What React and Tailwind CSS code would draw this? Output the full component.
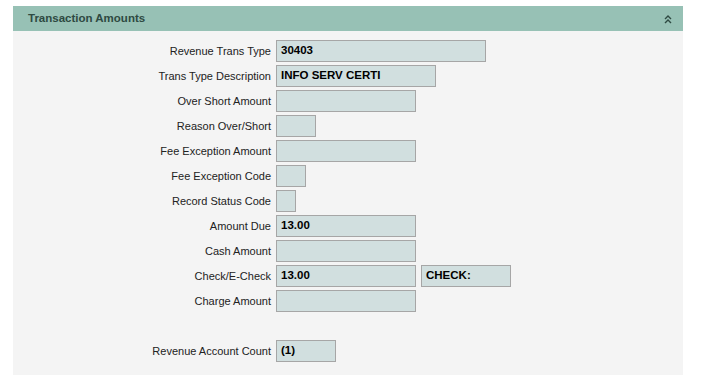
import React from 'react';

const rows = [
  { label: 'Revenue Trans Type', value: '30403', w: 'w-[210px]' },
  { label: 'Trans Type Description', value: 'INFO SERV CERTI', w: 'w-[160px]' },
  { label: 'Over Short Amount', value: '', w: 'w-[140px]' },
  { label: 'Reason Over/Short', value: '', w: 'w-[40px]' },
  { label: 'Fee Exception Amount', value: '', w: 'w-[140px]' },
  { label: 'Fee Exception Code', value: '', w: 'w-[30px]' },
  { label: 'Record Status Code', value: '', w: 'w-[20px]' },
  { label: 'Amount Due', value: '13.00', w: 'w-[140px]' },
  { label: 'Cash Amount', value: '', w: 'w-[140px]' },
  { label: 'Check/E-Check', value: '13.00', w: 'w-[140px]', extra: 'CHECK:' },
  { label: 'Charge Amount', value: '', w: 'w-[140px]' },
  { spacer: true },
  { label: 'Revenue Account Count', value: '(1)', w: 'w-[60px]' },
];

const Field = ({ value, w }) => (
  <div
    className={`${w} h-[22px] shrink-0 border border-[#a6a6a6] bg-[#d1dfdf] pl-[4px] flex items-center font-bold text-black text-[11.5px]`}
  >
    {value}
  </div>
);

const App = () => {
  return (
    <div className="bg-white min-h-[382px] pt-[6px] pl-[13px] font-['Liberation_Sans',Arial,sans-serif] text-[11px]">
      <div className="w-[670px]">
        <div className="h-[25px] bg-[#97c1b5] flex items-center justify-between pl-[15px] pr-[11px]">
          <span className="font-bold text-[#2e4a42] text-[11.5px]">Transaction Amounts</span>
          <svg width="8" height="10" viewBox="0 0 8 10" className="text-[#2e4a42]">
            <path d="M1 5 L4 2 L7 5 M1 9 L4 6 L7 9" stroke="currentColor" strokeWidth="1.4" fill="none" />
          </svg>
        </div>
        <div className="bg-[#f4f4f4] pt-[9px] pb-[13px] flex flex-col gap-[3px]">
          {rows.map((r, i) =>
            r.spacer ? (
              <div key={i} className="h-[22px]" />
            ) : (
              <div key={i} className="flex items-center h-[22px]">
                <div className="w-[263px] text-right pr-[5px] text-[#222]">{r.label}</div>
                <Field value={r.value} w={r.w} />
                {r.extra && (
                  <div className="ml-[5px]">
                    <Field value={r.extra} w="w-[90px]" />
                  </div>
                )}
              </div>
            )
          )}
        </div>
      </div>
    </div>
  );
};

export default App;
